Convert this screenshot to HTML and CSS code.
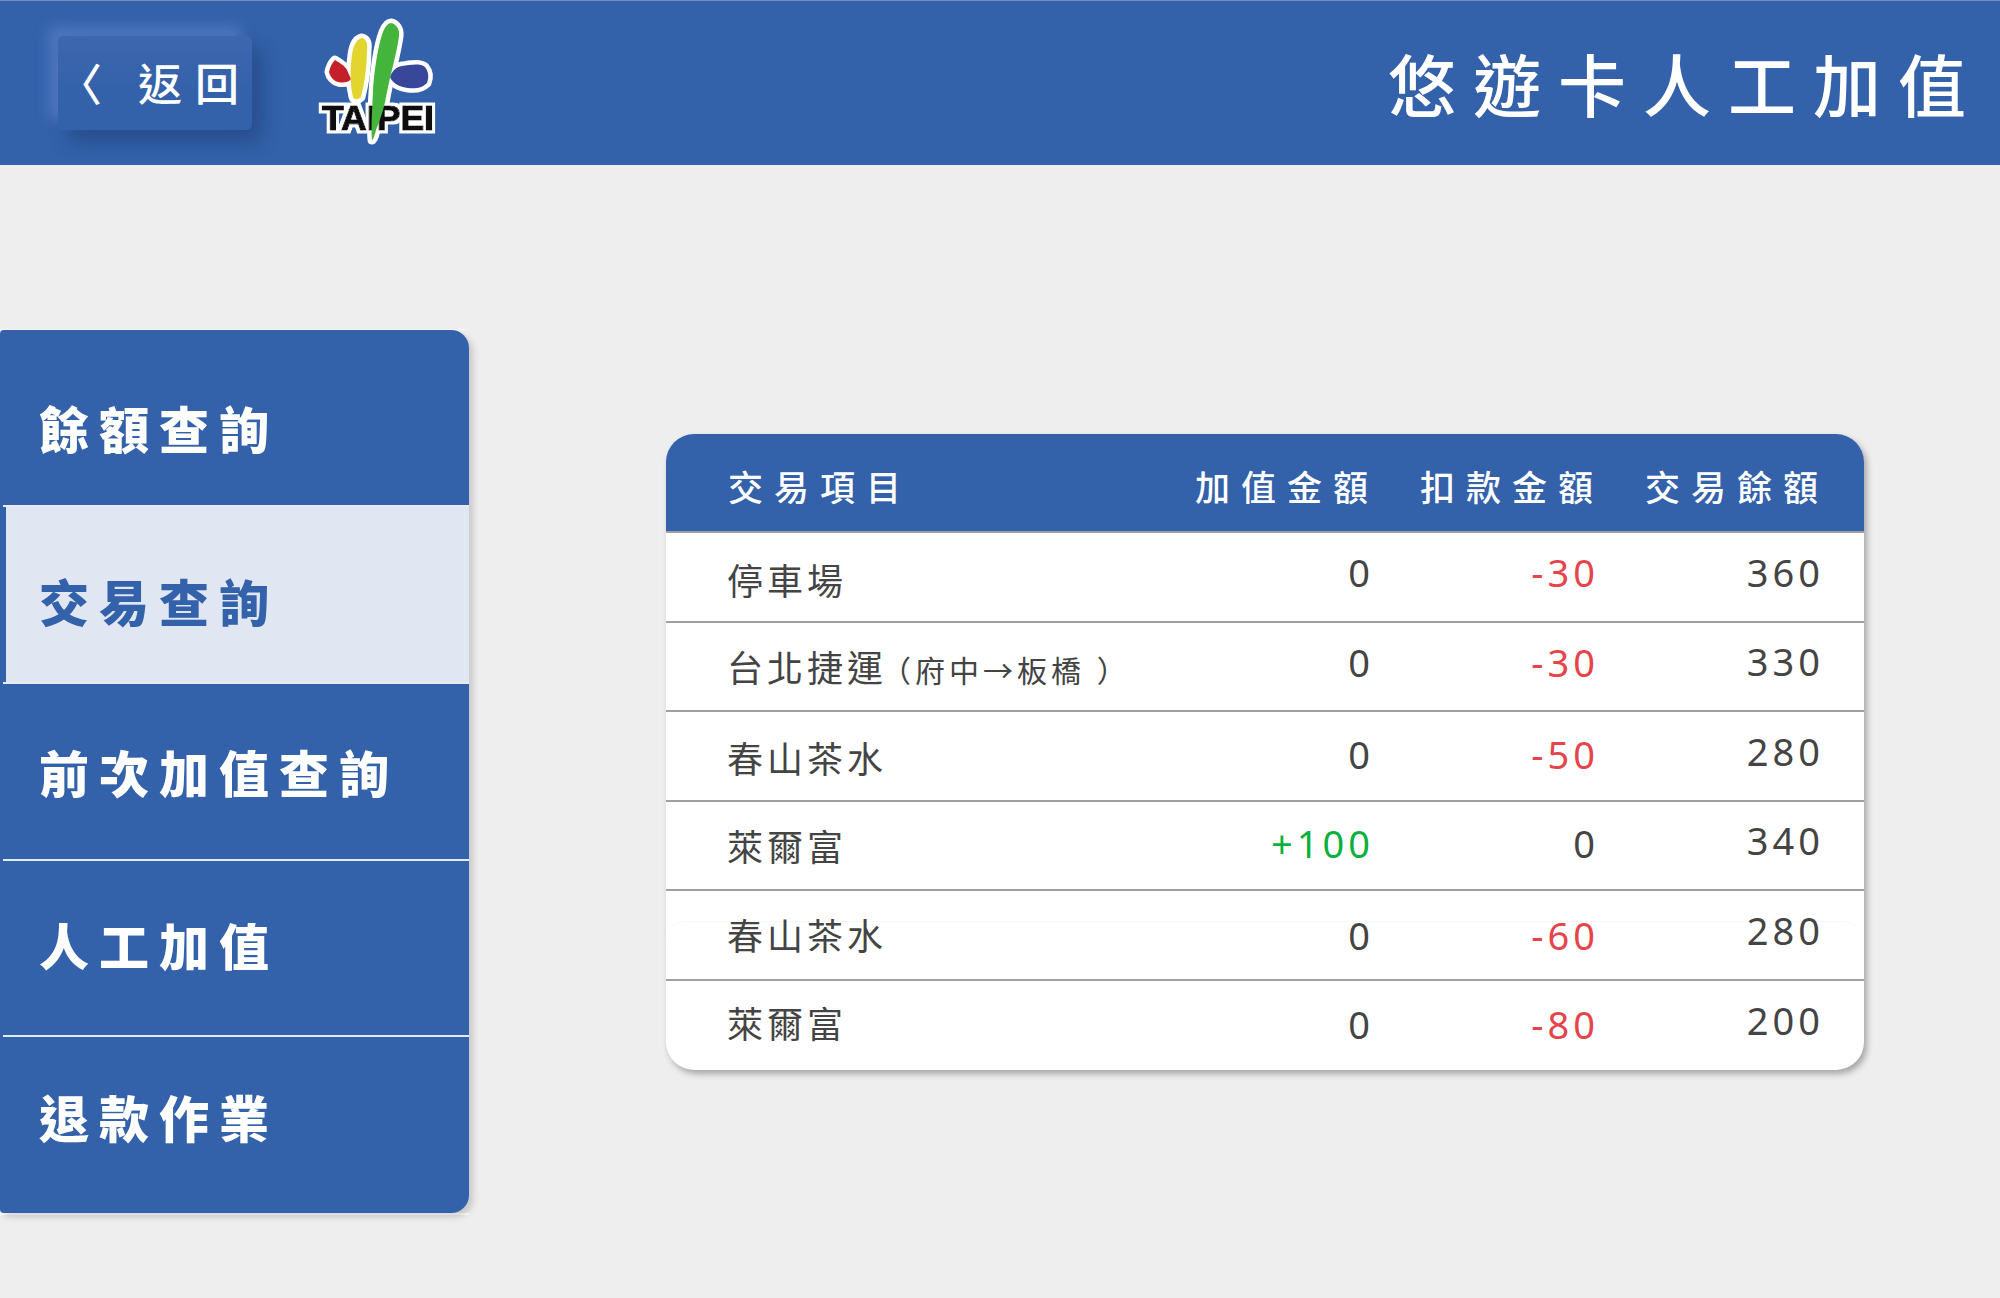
FILE: index.html
```html
<!DOCTYPE html>
<html lang="zh-Hant">
<head>
<meta charset="utf-8">
<title>悠遊卡人工加值</title>
<link rel="stylesheet" href="styles.css">
</head>
<body>
<header class="topbar">
  <div class="topbar-left">
    <button class="back"><span class="back-arrow">〈</span><span class="back-label">返回</span></button>
    <svg class="logo" viewBox="0 0 170 160" aria-label="TAIPEI">
      <defs>
        <path id="lg-red" d="M45 60 C50 63 55 66 57 70 L61 79 C58 83 53 83 48 82 C44 81 40 77 39 72 C40 67 42 63 45 60 Z"/>
        <path id="lg-yellow" d="M72 38 C76 39 78 43 77 50 C77 65 75 82 71 97 C68 100 64 100 63 97 C60 85 60 68 62 55 C63 47 66 39 72 38 Z"/>
        <path id="lg-blue" d="M100 77 C102 71 106 67 112 66 C120 65 130 63 135 67 C139 72 139 78 137 83 C132 88 125 89 118 88 C110 87 103 84 100 77 Z"/>
        <path id="lg-green" d="M101 23 C106 24 110 29 109 36 C107 52 101 72 97 92 C95 105 91 118 86 130 C85 135 83 140 82 140 C81 130 82 110 83 92 C84 72 88 45 93 32 C95 27 98 23 101 23 Z"/>
        <filter id="lg-halo" x="-10%" y="-30%" width="120%" height="160%">
          <feMorphology in="SourceAlpha" operator="dilate" radius="3" result="grown"/>
          <feFlood flood-color="#fff"/>
          <feComposite in2="grown" operator="in" result="halo"/>
          <feMerge><feMergeNode in="halo"/><feMergeNode in="SourceGraphic"/></feMerge>
        </filter>
      </defs>
      <g class="logo-halo">
        <use href="#lg-red"/><use href="#lg-yellow"/><use href="#lg-blue"/><use href="#lg-green"/>
      </g>
      <use class="logo-red" href="#lg-red"/>
      <use class="logo-yellow" href="#lg-yellow"/>
      <use class="logo-blue" href="#lg-blue"/>
      <text class="logo-text" x="32" y="130" textLength="112" lengthAdjust="spacingAndGlyphs" filter="url(#lg-halo)">TAIPEI</text>
      <use class="logo-green" href="#lg-green"/>
    </svg>
  </div>
  <h1 class="title">悠遊卡人工加值</h1>
</header>
<main class="content">
  <div class="side-frame">
    <nav class="side">
      <a class="side-item">餘額查詢</a>
      <a class="side-item active">交易查詢</a>
      <a class="side-item">前次加值查詢</a>
      <a class="side-item">人工加值</a>
      <a class="side-item">退款作業</a>
    </nav>
  </div>
  <section class="ledger">
    <div class="ledger-row ledger-head">
      <span>交易項目</span><span class="num">加值金額</span><span class="num">扣款金額</span><span class="num">交易餘額</span>
    </div>
    <div class="ledger-row">
      <span class="name">停車場</span><span class="num">0</span><span class="num minus">-30</span><span class="num bal">360</span>
    </div>
    <div class="ledger-row">
      <span class="name">台北捷運<small>（府中→板橋 ）</small></span><span class="num">0</span><span class="num minus">-30</span><span class="num bal">330</span>
    </div>
    <div class="ledger-row">
      <span class="name">春山茶水</span><span class="num">0</span><span class="num minus">-50</span><span class="num bal">280</span>
    </div>
    <div class="ledger-row">
      <span class="name">萊爾富</span><span class="num plus">+100</span><span class="num">0</span><span class="num bal">340</span>
    </div>
    <div class="ledger-row ghost">
      <span class="name">春山茶水</span><span class="num">0</span><span class="num minus">-60</span><span class="num bal">280</span>
    </div>
    <div class="ledger-row">
      <span class="name">萊爾富</span><span class="num">0</span><span class="num minus">-80</span><span class="num bal">200</span>
    </div>
  </section>
</main>
</body>
</html>
```
FILE: styles.css
```css
* { box-sizing: border-box; }
html, body { margin: 0; height: 100%; }
body {
  background: #eeeeee;
  font-family: "Noto Sans", "Noto Sans CJK TC", sans-serif;
  color: #444;
  overflow: hidden;
}
.topbar {
  height: 165px;
  background: #3361aa;
  border-top: 1px solid #6f8fc0;
  display: flex;
  align-items: center;
  justify-content: space-between;
  padding: 0 17px 0 58px;
}
.topbar-left { display: flex; align-items: center; }
.back {
  width: 194px;
  height: 94px;
  border: 0;
  border-radius: 6px;
  background: linear-gradient(#3e67ae, #3361aa 60%);
  box-shadow: -10px -10px 14px rgba(110, 145, 215, .45), 10px 12px 18px rgba(25, 50, 100, .4);
  color: #fff;
  display: flex;
  align-items: center;
  font-family: inherit;
  font-size: 44px;
  font-weight: 500;
  padding: 0 0 2px 0;
}
.back-arrow { width: 82px; text-align: left; }
.back-label { letter-spacing: 13px; white-space: nowrap; }
.logo { width: 170px; height: 160px; margin: 0 0 6px 38px; display: block; }
.logo-halo { fill: #fff; stroke: #fff; stroke-width: 9px; stroke-linejoin: round; }
.logo-red { fill: #c4202b; }
.logo-yellow { fill: #e2d52f; }
.logo-blue { fill: #39479a; }
.logo-green { fill: #44b43c; }
.logo-text {
  font-family: "Liberation Sans", sans-serif;
  font-weight: 700;
  font-size: 35px;
  fill: #0a0a0a;
  stroke: #0a0a0a;
  stroke-width: 1.2px;
}
.title {
  margin: 0;
  padding-bottom: 2px;
  color: #fff;
  font-size: 68px;
  font-weight: 500;
  letter-spacing: 17px;
  white-space: nowrap;
}
.content { display: flex; align-items: flex-start; }
.side-frame {
  width: 469px;
  margin-top: 164px;
  border-top: 1px solid #f7f7f7;
  border-bottom: 2px solid #fff;
}
.side {
  height: 883px;
  background: #3361aa;
  border-radius: 4px 18px 18px 4px;
  box-shadow: 4px 4px 6px rgba(0, 0, 0, .16);
  display: grid;
  grid-template-rows: 177px 177px 177px 176px 176px;
  overflow: hidden;
}
.side-item {
  display: flex;
  align-items: center;
  padding-left: 39px;
  color: #fff;
  font-size: 50px;
  font-weight: 900;
  letter-spacing: 10px;
  position: relative;
}
.side-item:nth-child(1) { padding-top: 18px; }
.side-item:nth-child(2) { padding-top: 10px; }
.side-item:nth-child(3) { padding-bottom: 2px; }
.side-item:nth-child(4) { padding-bottom: 10px; }
.side-item:nth-child(5) { padding-bottom: 18px; }
.side-item:not(:last-child)::after {
  content: "";
  position: absolute;
  left: 3px;
  right: 0;
  bottom: 0;
  height: 2px;
  background: #e6ebf5;
}
.side-item.active {
  background: #e0e6f2;
  color: #3361aa;
  border-left: 6px solid #3361aa;
  padding-left: 33px;
}
.side-item.active::after { left: -3px; }
.ledger {
  width: 1198px;
  margin: 269px 0 0 197px;
  background: #fff;
  border-radius: 28px;
  box-shadow: 3px 4px 6px rgba(0, 0, 0, .3);
  display: grid;
  grid-template-rows: 99px repeat(6, 89.5px);
  overflow: hidden;
  isolation: isolate;
}
.ledger-row {
  display: grid;
  grid-template-columns: 1fr 225px 225px 225px;
  align-items: center;
  padding: 0 40px 0 62px;
  font-size: 36px;
  letter-spacing: 4px;
  border-bottom: 2px solid #a0a0a0;
  position: relative;
}
.ledger-row:last-child { border-bottom: 0; }
.ledger-head {
  background: #3361aa;
  color: #fff;
  font-size: 35px;
  font-weight: 500;
  letter-spacing: 11px;
  padding-top: 6px;
}
.ledger-head .num { margin-right: -5px; }
.ghost::before {
  content: "";
  position: absolute;
  z-index: -1;
  left: 0;
  right: 0;
  top: 30px;
  height: 40px;
  border-top: 1px solid #f8f8f8;
  border-radius: 20px 20px 0 0;
}
.num { text-align: right; white-space: nowrap; }
.ledger-row:not(.ledger-head) .num { font-size: 38px; letter-spacing: 4px; margin-top: -4px; }
.ledger-row:not(.ledger-head) .num.bal { margin-top: -10px; }
.ledger-row:nth-child(2) .num:not(.bal) { margin-top: -10px; }
.ledger-row:nth-child(3) .num:not(.bal) { margin-top: -8px; }
.ledger-row:nth-child(6) .num:not(.bal) { margin-top: 0; }
.ledger-row:nth-child(7) .num:not(.bal) { margin-top: -2px; }
.name { white-space: nowrap; margin-left: -1px; }
.ledger-row:nth-child(2) .name { margin-top: 6px; }
.ledger-row:nth-child(3) .name { margin-top: 1px; }
.ledger-row:nth-child(4) .name { margin-top: 4px; }
.ledger-row:nth-child(7) .name { margin-top: -6px; }
.name small { font-size: 30px; letter-spacing: 4px; margin-left: -6px; }
.minus { color: #e5444a; }
.plus { color: #0cb03c; }
```
